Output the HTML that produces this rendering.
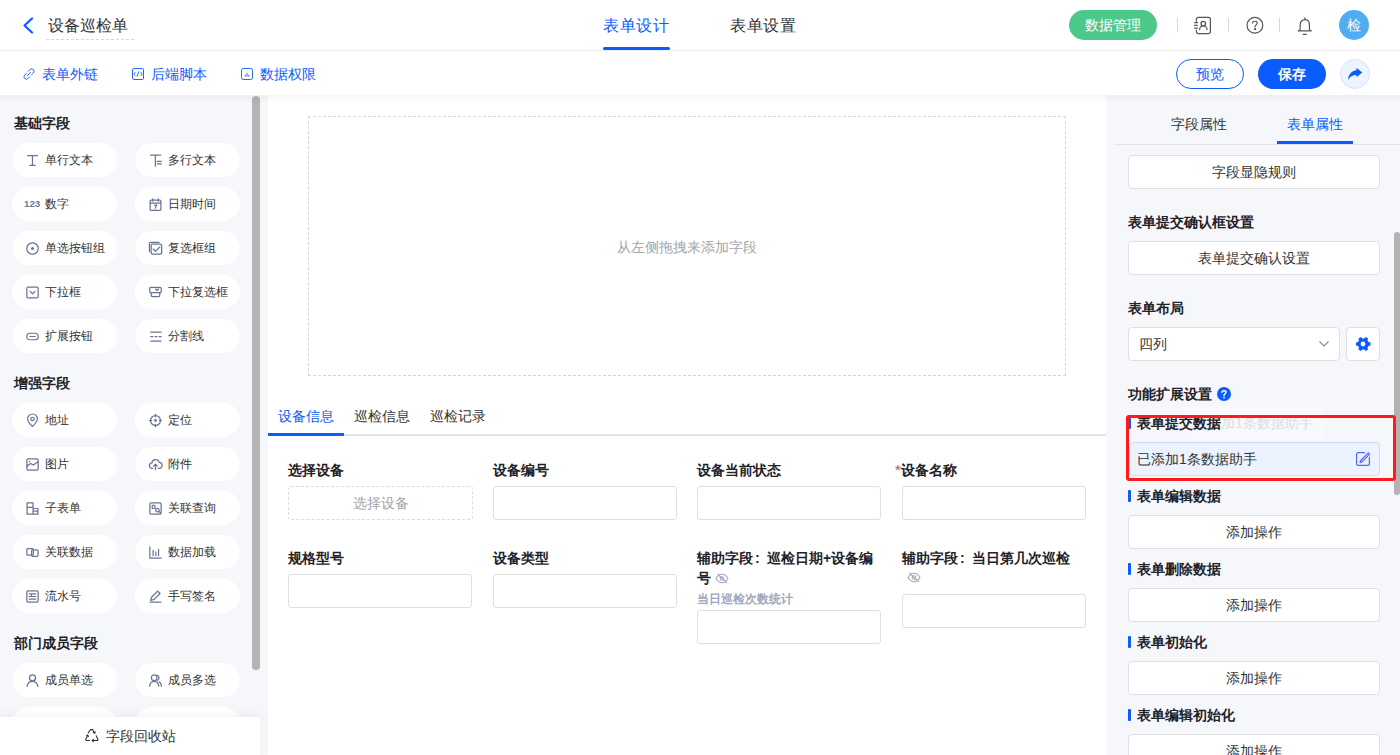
<!DOCTYPE html>
<html><head><meta charset="utf-8">
<style>
*{box-sizing:border-box;margin:0;padding:0}
html,body{width:1400px;height:755px;overflow:hidden;background:#f5f7fb;font-family:"Liberation Sans",sans-serif;color:#333}
.abs{position:absolute}
#hdr{position:absolute;left:0;top:0;width:1400px;height:51px;background:#fff;border-bottom:1px solid #eceef2}
#tb{position:absolute;left:0;top:51px;width:1400px;height:44px;background:#fff}
.t{position:absolute;white-space:nowrap;line-height:1}
/* left */
#left{position:absolute;left:0;top:95px;width:268px;height:660px;background:#f5f7fb;overflow:hidden}
.sec{position:absolute;left:14px;margin-top:1px;font-size:14px;font-weight:bold;color:#1f2329}
.pill{position:absolute;width:105px;height:34px;border-radius:17px;background:#fff}
.pill .ic{position:absolute;left:13.5px;top:10.5px;width:13px;height:13px;overflow:visible}
.pill .lb{position:absolute;left:33px;top:0;line-height:34px;font-size:12px;color:#333;white-space:nowrap}
#sb{position:absolute;left:252px;top:96px;width:8px;height:574px;border-radius:4px;background:#b3b3b3}
#foot{position:absolute;left:0;top:717px;width:260px;height:38px;background:#fff;box-shadow:0 -4px 8px rgba(0,0,0,0.04)}
/* center */
#canvas{position:absolute;left:268px;top:95px;width:838px;height:660px;background:#fff}
#drop{position:absolute;left:308px;top:116px;width:758px;height:260px;border:1px dashed #d6d6d6}
.lab{position:absolute;font-size:14px;font-weight:bold;color:#1f2329;white-space:nowrap;line-height:20px}
.inp{position:absolute;width:184px;height:34px;border:1px solid #e0e0e0;border-radius:3px;background:#fff}
/* right */
#right{position:absolute;left:1106px;top:95px;width:294px;height:660px;background:#f5f7fb}
.rbtn{position:absolute;left:1128px;width:252px;height:34px;background:#fff;border:1px solid #dfe0e3;border-radius:4px;font-size:14px;color:#333;text-align:center;line-height:32px}
.rlab{position:absolute;left:1128px;font-size:14px;font-weight:bold;color:#1f2329;white-space:nowrap;line-height:20px}
.bar{position:absolute;left:1128px;width:3px;height:12px;background:#0a5cff;border-radius:1px}
</style></head><body>

<div id="hdr"></div>
<div id="tb"></div>

<!-- header content -->
<svg class="abs" style="left:22px;top:17px" width="12" height="17" viewBox="0 0 12 17"><path d="M10 1.5 L2.5 8.5 L10 15.5" fill="none" stroke="#0a5cff" stroke-width="2.2" stroke-linecap="round" stroke-linejoin="round"/></svg>
<div class="t" style="left:48px;top:18px;font-size:16px;color:#333">设备巡检单</div>
<div class="abs" style="left:46px;top:39px;width:88px;border-top:1px dashed #d9d9d9"></div>

<div class="t" style="left:603px;top:18px;font-size:16px;color:#0a5cff;letter-spacing:0.6px">表单设计</div>
<div class="abs" style="left:603px;top:47px;width:67px;height:3px;border-radius:2px;background:#0a5cff"></div>
<div class="t" style="left:730px;top:18px;font-size:16px;color:#333;letter-spacing:0.6px">表单设置</div>

<div class="abs" style="left:1069px;top:10px;width:88px;height:30px;border-radius:15px;background:#4cc98a;color:#fff;font-size:14px;text-align:center;line-height:30px">数据管理</div>
<div class="abs" style="left:1177px;top:18px;width:1px;height:14px;background:#d8d8d8"></div>
<div class="abs" style="left:1228px;top:18px;width:1px;height:14px;background:#d8d8d8"></div>
<div class="abs" style="left:1279px;top:18px;width:1px;height:14px;background:#d8d8d8"></div>
<svg class="abs" style="left:1193px;top:16px" width="19" height="19" viewBox="0 0 19 19" fill="none" stroke="#555" stroke-width="1.25" stroke-linecap="round"><path d="M3.4 5.2V3.2a1.9 1.9 0 0 1 1.9-1.9H15.5a1.9 1.9 0 0 1 1.9 1.9V15.6a1.9 1.9 0 0 1-1.9 1.9H5.3a1.9 1.9 0 0 1-1.9-1.9V14"/><path d="M1.5 6.6h3M1.5 9.3h3M1.5 12.1h3"/><circle cx="10.3" cy="7.6" r="2.3"/><path d="M6.6 13.6a3.7 3.8 0 0 1 7.4 0"/></svg>
<svg class="abs" style="left:1246px;top:16px" width="19" height="19" viewBox="0 0 19 19" fill="none" stroke="#555" stroke-width="1.2" stroke-linecap="round"><circle cx="8.9" cy="9.3" r="7.9"/><path d="M6.6 7.1C6.6 4.6 11.2 4.6 11.2 7.1C11.2 8.8 9 8.9 9 10.9"/><circle cx="9" cy="13.2" r="0.5" fill="#555"/></svg>
<svg class="abs" style="left:1297px;top:17px" width="16" height="19" viewBox="0 0 16 19" fill="none" stroke="#555" stroke-width="1.2" stroke-linecap="round" stroke-linejoin="round"><path d="M7.8 0.9v1"/><path d="M3.2 12.2V7.6C3.2 4.6 5.2 2.6 7.8 2.6S12.4 4.6 12.4 7.6V12.2C12.4 13 13.4 13.6 14.3 13.9H1.3C2.2 13.6 3.2 13 3.2 12.2z"/><path d="M6.3 17.3H9.3"/></svg>
<div class="abs" style="left:1339px;top:10px;width:30px;height:30px;border-radius:15px;background:#52acf2;color:#fff;font-size:14px;text-align:center;line-height:30px">检</div>

<!-- toolbar -->
<svg class="abs" style="left:23px;top:68px" width="12" height="12" viewBox="0 0 12 12" fill="none" stroke="#1a5ff5" stroke-width="0.95" stroke-linecap="round"><path d="M5.2 3.3 L6.9 1.6 a2.4 2.4 0 0 1 3.4 3.4 L8.6 6.7"/><path d="M6.8 8.7 L5.1 10.4 a2.4 2.4 0 0 1 -3.4 -3.4 L3.4 5.3"/><path d="M4.4 7.6 L7.6 4.4"/></svg>
<div class="t" style="left:42px;top:67px;font-size:14px;color:#0a5cff">表单外链</div>
<svg class="abs" style="left:132px;top:68px" width="12" height="12" viewBox="0 0 12 12" fill="none" stroke="#1a5ff5" stroke-width="0.95"><rect x="0.5" y="0.5" width="11" height="11" rx="1.3"/><path d="M3.3 4.2 L1.8 6 L3.3 7.8M8.7 4.2 L10.2 6 L8.7 7.8M7 3.5 L5 8.5"/></svg>
<div class="t" style="left:151px;top:67px;font-size:14px;color:#0a5cff">后端脚本</div>
<svg class="abs" style="left:241px;top:68px" width="12" height="12" viewBox="0 0 12 12" fill="none" stroke="#1a5ff5" stroke-width="0.95"><rect x="0.5" y="0.5" width="11" height="11" rx="1.8"/><path d="M4.3 8.5V6.8M6 8.5V5M7.7 8.5V6.8"/></svg>
<div class="t" style="left:260px;top:67px;font-size:14px;color:#0a5cff">数据权限</div>

<div class="abs" style="left:1176px;top:59px;width:68px;height:30px;border-radius:15px;border:1px solid #0a5cff;color:#0a5cff;font-size:14px;text-align:center;line-height:28px;background:#fff">预览</div>
<div class="abs" style="left:1258px;top:59px;width:68px;height:30px;border-radius:15px;background:#0a5cff;color:#fff;font-size:14px;text-align:center;line-height:30px;font-weight:bold">保存</div>
<div class="abs" style="left:1340px;top:59px;width:30px;height:30px;border-radius:15px;background:#eef4ff;border:1px solid #d5e3fb"></div>
<svg class="abs" style="left:1347px;top:66px" width="16" height="16" viewBox="0 0 16 16"><path d="M9.5 1.7 L15.2 6.5 L9.5 11.3 V8.9 C5.6 8.9 3 10.5 1 14.1 C1.4 8.6 4.6 4.6 9.5 4.2 Z" fill="#0a5cff"/></svg>

<!-- left panel -->
<div id="left">
<div class="sec" style="top:19px">基础字段</div>
<div class="pill" style="left:12px;top:48px"><svg class="ic" viewBox="0 0 12 12"><path d="M1.5 1.5h9M6 1.5v9M3.5 10.5h5" stroke="#6b7494" stroke-width="1.15" fill="none" stroke-linecap="round" stroke-linejoin="round"/></svg><span class="lb">单行文本</span></div>
<div class="pill" style="left:135px;top:48px"><svg class="ic" viewBox="0 0 12 12"><path d="M1.2 1h9.6M5.9 1v10.2M7.6 6.9h3.8M7.6 9.2h3.8" stroke="#6b7494" stroke-width="1.15" fill="none" stroke-linecap="round" stroke-linejoin="round"/></svg><span class="lb">多行文本</span></div>
<div class="pill" style="left:12px;top:92px"><span style="position:absolute;left:12px;top:12px;font-family:'Liberation Sans',sans-serif;font-weight:bold;font-size:9.7px;line-height:10px;color:#6e7691">123</span><span class="lb">数字</span></div>
<div class="pill" style="left:135px;top:92px"><svg class="ic" viewBox="0 0 12 12"><rect x="1" y="2" width="10" height="9.5" rx="1.2" stroke="#6b7494" stroke-width="1.15" fill="none" stroke-linecap="round" stroke-linejoin="round"/><path d="M1 4.8h10M3.5 0.8v2.2M8.5 0.8v2.2M5 6.5h2.2L5.8 9.5" stroke="#6b7494" stroke-width="1.15" fill="none" stroke-linecap="round" stroke-linejoin="round"/></svg><span class="lb">日期时间</span></div>
<div class="pill" style="left:12px;top:136px"><svg class="ic" viewBox="0 0 12 12"><circle cx="6" cy="6" r="5.3" stroke="#6b7494" stroke-width="1.15" fill="none" stroke-linecap="round" stroke-linejoin="round"/><circle cx="6" cy="6" r="1.4" fill="#6b7494"/></svg><span class="lb">单选按钮组</span></div>
<div class="pill" style="left:135px;top:136px"><svg class="ic" viewBox="0 0 12 12"><path d="M0.4 9V1.2a0.9 0.9 0 0 1 0.9-0.9H9.4" stroke="#6b7494" stroke-width="1.15" fill="none" stroke-linecap="round" stroke-linejoin="round"/><rect x="2" y="1.9" width="9.7" height="9.3" rx="1" stroke="#6b7494" stroke-width="1.15" fill="none" stroke-linecap="round" stroke-linejoin="round"/><path d="M3.9 6.5l2.2 2.2 4-4.2" stroke="#6b7494" stroke-width="1.15" fill="none" stroke-linecap="round" stroke-linejoin="round"/></svg><span class="lb">复选框组</span></div>
<div class="pill" style="left:12px;top:180px"><svg class="ic" viewBox="0 0 12 12"><rect x="0.8" y="1" width="10.4" height="10" rx="1" stroke="#6b7494" stroke-width="1.15" fill="none" stroke-linecap="round" stroke-linejoin="round"/><path d="M3.8 5l2.2 2.2L8.2 5" stroke="#6b7494" stroke-width="1.15" fill="none" stroke-linecap="round" stroke-linejoin="round"/></svg><span class="lb">下拉框</span></div>
<div class="pill" style="left:135px;top:180px"><svg class="ic" viewBox="0 0 12 12"><rect x="0.7" y="1.2" width="10.6" height="5" rx="1" stroke="#6b7494" stroke-width="1.15" fill="none" stroke-linecap="round" stroke-linejoin="round"/><path d="M2.1 6.2v2.6a1 1 0 0 0 1 1h5.8a1 1 0 0 0 1-1V6.2" stroke="#6b7494" stroke-width="1.15" fill="none" stroke-linecap="round" stroke-linejoin="round"/><path d="M6.2 2.8l1.3 1.4 1.3-1.4" stroke="#6b7494" stroke-width="1.15" fill="none" stroke-linecap="round" stroke-linejoin="round"/></svg><span class="lb">下拉复选框</span></div>
<div class="pill" style="left:12px;top:224px"><svg class="ic" viewBox="0 0 12 12"><rect x="0.7" y="3" width="10.6" height="6" rx="3" stroke="#6b7494" stroke-width="1.15" fill="none" stroke-linecap="round" stroke-linejoin="round"/><path d="M3.5 6h5" stroke="#6b7494" stroke-width="1.15" fill="none" stroke-linecap="round" stroke-linejoin="round"/></svg><span class="lb">扩展按钮</span></div>
<div class="pill" style="left:135px;top:224px"><svg class="ic" viewBox="0 0 12 12"><path d="M1.6 2h9.5M1.6 10.2h9.5M1.6 6.2h2M5.6 6.2h1.7M9.4 6.2h1.7" stroke="#6b7494" stroke-width="1.15" fill="none" stroke-linecap="round" stroke-linejoin="round"/></svg><span class="lb">分割线</span></div>
<div class="sec" style="top:279px">增强字段</div>
<div class="pill" style="left:12px;top:308px"><svg class="ic" viewBox="0 0 12 12"><path d="M6 11.5C3 8.5 1.5 6.5 1.5 4.5a4.5 4.5 0 0 1 9 0c0 2-1.5 4-4.5 7z" stroke="#6b7494" stroke-width="1.15" fill="none" stroke-linecap="round" stroke-linejoin="round"/><circle cx="6" cy="4.6" r="1.6" stroke="#6b7494" stroke-width="1.15" fill="none" stroke-linecap="round" stroke-linejoin="round"/></svg><span class="lb">地址</span></div>
<div class="pill" style="left:135px;top:308px"><svg class="ic" viewBox="0 0 12 12"><circle cx="6" cy="6" r="4.6" stroke="#6b7494" stroke-width="1.15" fill="none" stroke-linecap="round" stroke-linejoin="round"/><circle cx="6" cy="6" r="1.3" fill="#6b7494"/><path d="M6 0.3v2.2M6 9.5v2.2M0.3 6h2.2M9.5 6h2.2" stroke="#6b7494" stroke-width="1.15" fill="none" stroke-linecap="round" stroke-linejoin="round"/></svg><span class="lb">定位</span></div>
<div class="pill" style="left:12px;top:352px"><svg class="ic" viewBox="0 0 12 12"><rect x="0.8" y="0.8" width="10.4" height="10.4" rx="1.2" stroke="#6b7494" stroke-width="1.15" fill="none" stroke-linecap="round" stroke-linejoin="round"/><path d="M0.8 7.5l3.5-2.5 2.5 1.5L11 3.5M3 3.3h0.5" stroke="#6b7494" stroke-width="1.15" fill="none" stroke-linecap="round" stroke-linejoin="round"/></svg><span class="lb">图片</span></div>
<div class="pill" style="left:135px;top:352px"><svg class="ic" viewBox="0 0 12 12"><path d="M3.5 9.5H3a2.5 2.5 0 0 1-0.3-5A3.5 3.5 0 0 1 9.5 4a2.6 2.6 0 0 1-0.3 5.5H8.5M6 10.8V6M4.3 7.5L6 5.8l1.7 1.7" stroke="#6b7494" stroke-width="1.15" fill="none" stroke-linecap="round" stroke-linejoin="round"/></svg><span class="lb">附件</span></div>
<div class="pill" style="left:12px;top:396px"><svg class="ic" viewBox="0 0 12 12"><path d="M1 0.8h5.5v10.4H1zM1 5h5.5M6.5 6h4.5v5.2H6.5M6.5 8.5h4.5" stroke="#6b7494" stroke-width="1.15" fill="none" stroke-linecap="round" stroke-linejoin="round"/></svg><span class="lb">子表单</span></div>
<div class="pill" style="left:135px;top:396px"><svg class="ic" viewBox="0 0 12 12"><rect x="0.8" y="0.8" width="10.4" height="10.4" rx="1" stroke="#6b7494" stroke-width="1.15" fill="none" stroke-linecap="round" stroke-linejoin="round"/><path d="M3 3h2.5v3H3z" stroke="#6b7494" stroke-width="1.15" fill="none" stroke-linecap="round" stroke-linejoin="round"/><circle cx="7.8" cy="7.5" r="1.6" stroke="#6b7494" stroke-width="1.15" fill="none" stroke-linecap="round" stroke-linejoin="round"/><path d="M9 8.7l1.5 1.5" stroke="#6b7494" stroke-width="1.15" fill="none" stroke-linecap="round" stroke-linejoin="round"/></svg><span class="lb">关联查询</span></div>
<div class="pill" style="left:12px;top:440px"><svg class="ic" viewBox="0 0 12 12"><rect x="0.8" y="2.5" width="6" height="6" rx="1" stroke="#6b7494" stroke-width="1.15" fill="none" stroke-linecap="round" stroke-linejoin="round"/><rect x="5.2" y="3.5" width="6" height="6" rx="1" stroke="#6b7494" stroke-width="1.15" fill="none" stroke-linecap="round" stroke-linejoin="round"/></svg><span class="lb">关联数据</span></div>
<div class="pill" style="left:135px;top:440px"><svg class="ic" viewBox="0 0 12 12"><path d="M0.8 0.8v10.4h10.4M3.8 4v5M6.3 5.5v3.5M8.8 3v6" stroke="#6b7494" stroke-width="1.15" fill="none" stroke-linecap="round" stroke-linejoin="round"/></svg><span class="lb">数据加载</span></div>
<div class="pill" style="left:12px;top:484px"><svg class="ic" viewBox="0 0 12 12"><rect x="0.8" y="0.8" width="10.4" height="10.4" rx="1" stroke="#6b7494" stroke-width="1.15" fill="none" stroke-linecap="round" stroke-linejoin="round"/><path d="M3 3.5h6M3 6h6M3 8.5h6M5 3.5v2.5" stroke="#6b7494" stroke-width="1.15" fill="none" stroke-linecap="round" stroke-linejoin="round"/></svg><span class="lb">流水号</span></div>
<div class="pill" style="left:135px;top:484px"><svg class="ic" viewBox="0 0 12 12"><path d="M1.5 9.5l1-3L8 1l2.2 2.2-5.5 5.5zM1 11.3h10" stroke="#6b7494" stroke-width="1.15" fill="none" stroke-linecap="round" stroke-linejoin="round"/></svg><span class="lb">手写签名</span></div>
<div class="sec" style="top:539px">部门成员字段</div>
<div class="pill" style="left:12px;top:568px"><svg class="ic" viewBox="0 0 12 12"><circle cx="6" cy="3.5" r="2.8" stroke="#6b7494" stroke-width="1.15" fill="none" stroke-linecap="round" stroke-linejoin="round"/><path d="M1 11.5c0.5-3.5 2.5-4.8 5-4.8s4.5 1.3 5 4.8" stroke="#6b7494" stroke-width="1.15" fill="none" stroke-linecap="round" stroke-linejoin="round"/></svg><span class="lb">成员单选</span></div>
<div class="pill" style="left:135px;top:568px"><svg class="ic" viewBox="0 0 12 12"><circle cx="4.8" cy="3.5" r="2.6" stroke="#6b7494" stroke-width="1.15" fill="none" stroke-linecap="round" stroke-linejoin="round"/><path d="M0.5 11.3c0.4-3.3 2-4.6 4.3-4.6s3.9 1.3 4.3 4.6M7.8 1.2a2.6 2.6 0 0 1 0 4.7M9.3 7.2c1.3 0.7 2 2 2.2 4" stroke="#6b7494" stroke-width="1.15" fill="none" stroke-linecap="round" stroke-linejoin="round"/></svg><span class="lb">成员多选</span></div>
<div class="pill" style="left:12px;top:612px"><svg class="ic" viewBox="0 0 12 12"></svg><span class="lb">部门单选</span></div>
<div class="pill" style="left:135px;top:612px"><svg class="ic" viewBox="0 0 12 12"></svg><span class="lb">部门多选</span></div>

</div>
<div id="sb"></div>
<div id="foot">
  <svg class="abs" style="left:85px;top:12px;overflow:visible" width="14" height="13" viewBox="0 0 14 13" fill="none" stroke="#333" stroke-width="1.1" stroke-linecap="round" stroke-linejoin="round"><path d="M3.2 4 L5.6 0.6 H7.6 L9.6 4"/><path d="M8.4 3.6 L9.7 4.2 L10.2 2.8"/><path d="M11.2 6.8 L13 10.4 L12.4 11.5 H7.2"/><path d="M8.4 10.3 L7.2 11.5 L8.4 12.6"/><path d="M4.5 11.5 H1.3 L0.6 10.4 L2.8 6.2"/><path d="M1.5 6.2 L2.8 6.2 L3.3 7.6"/></svg>
  <div class="t" style="left:106px;top:12px;font-size:14px;color:#333">字段回收站</div>
</div>

<!-- canvas -->
<div id="canvas"></div>
<div id="drop"></div>
<div class="t" style="left:617px;top:240px;font-size:14px;color:#a6a6a6">从左侧拖拽来添加字段</div>
<!-- canvas tabs -->
<div class="abs" style="left:268px;top:434px;width:838px;height:2px;background:#e4e4e4"></div>
<div class="abs" style="left:268px;top:433px;width:76px;height:3px;background:#0a5cff"></div>
<div class="t" style="left:278px;top:409px;font-size:14px;color:#0a5cff">设备信息</div>
<div class="t" style="left:354px;top:409px;font-size:14px;color:#333">巡检信息</div>
<div class="t" style="left:430px;top:409px;font-size:14px;color:#333">巡检记录</div>
<!-- row 1 -->
<div class="lab" style="left:288px;top:460px">选择设备</div>
<div class="abs" style="left:288px;top:486px;width:185px;height:34px;border:1px dashed #dcdcdc;border-radius:3px;text-align:center;line-height:32px;font-size:14px;color:#a6a6a6">选择设备</div>
<div class="lab" style="left:493px;top:460px">设备编号</div>
<div class="inp" style="left:493px;top:486px"></div>
<div class="lab" style="left:697px;top:460px">设备当前状态</div>
<div class="inp" style="left:697px;top:486px"></div>
<div class="lab" style="left:895px;top:460px"><span style="color:#e8393b;font-weight:normal;font-size:15px">*</span>设备名称</div>
<div class="inp" style="left:902px;top:486px"></div>
<!-- row 2 -->
<div class="lab" style="left:288px;top:548px">规格型号</div>
<div class="inp" style="left:288px;top:574px"></div>
<div class="lab" style="left:493px;top:548px">设备类型</div>
<div class="inp" style="left:493px;top:574px"></div>
<div class="lab" style="left:697px;top:548px;width:185px;white-space:normal">辅助字段<span style="display:inline-block;width:14px;padding-left:2px">:</span>巡检日期+设备编号 <svg style="vertical-align:-1px" width="14" height="11" viewBox="0 0 14 11" fill="none" stroke="#a3a9bb" stroke-width="1.1"><path d="M1 5.5C3 2.3 5 1.3 7 1.3s4 1 6 4.2C11 8.7 9 9.7 7 9.7S3 8.7 1 5.5z"/><circle cx="7" cy="5.5" r="1.8"/><path d="M2.5 1l9.5 9"/></svg></div>
<div class="t" style="left:697px;top:593px;font-size:12px;font-weight:bold;color:#9ea6bc">当日巡检次数统计</div>
<div class="inp" style="left:697px;top:610px"></div>
<div class="lab" style="left:902px;top:548px">辅助字段<span style="display:inline-block;width:14px;padding-left:2px">:</span>当日第几次巡检</div>
<svg class="abs" style="left:907px;top:572px" width="14" height="11" viewBox="0 0 14 11" fill="none" stroke="#a3a9bb" stroke-width="1.1"><path d="M1 5.5C3 2.3 5 1.3 7 1.3s4 1 6 4.2C11 8.7 9 9.7 7 9.7S3 8.7 1 5.5z"/><circle cx="7" cy="5.5" r="1.8"/><path d="M2.5 1l9.5 9"/></svg>
<div class="inp" style="left:902px;top:594px"></div>


<!-- right -->
<div id="right"></div>
<!-- right panel -->
<div class="abs" style="left:1114px;top:144px;width:286px;height:1px;background:#e1e4ea"></div>
<div class="t" style="left:1171px;top:117px;font-size:14px;color:#333">字段属性</div>
<div class="t" style="left:1287px;top:117px;font-size:14px;color:#0a5cff">表单属性</div>
<div class="abs" style="left:1277px;top:141px;width:76px;height:3px;background:#0a5cff"></div>
<div class="rbtn" style="top:155px;height:34px">字段显隐规则</div>
<div class="rlab" style="top:212px">表单提交确认框设置</div>
<div class="rbtn" style="top:241px;height:34px">表单提交确认设置</div>
<div class="rlab" style="top:298px">表单布局</div>
<div class="abs" style="left:1128px;top:327px;width:212px;height:34px;background:#fff;border:1px solid #dfe0e3;border-radius:4px"></div>
<div class="t" style="left:1139px;top:337px;font-size:14px;color:#333">四列</div>
<svg class="abs" style="left:1318px;top:340px" width="12" height="8" viewBox="0 0 12 8" fill="none" stroke="#8c8c8c" stroke-width="1.1"><path d="M1.5 1.5l4.5 4.5 4.5-4.5"/></svg>
<div class="abs" style="left:1346px;top:327px;width:34px;height:34px;background:#fff;border:1px solid #dfe0e3;border-radius:4px"></div>
<svg class="abs" style="left:1354px;top:335px" width="18" height="18" viewBox="0 0 18 18"><path transform="rotate(90 9 9)" fill="#0a5cff" fill-rule="evenodd" d="M7.6 1.5h2.8l0.5 2.1 1.6 0.9 2.1-0.6 1.4 2.4-1.6 1.5v1.9l1.6 1.5-1.4 2.4-2.1-0.6-1.6 0.9-0.5 2.1H7.6l-0.5-2.1-1.6-0.9-2.1 0.6-1.4-2.4 1.6-1.5V7.8L2 6.3l1.4-2.4 2.1 0.6 1.6-0.9zM9 6.6a2.4 2.4 0 1 0 0 4.8 2.4 2.4 0 1 0 0-4.8z"/></svg>
<div class="rlab" style="top:384px">功能扩展设置</div>
<svg class="abs" style="left:1217px;top:387px" width="14" height="14" viewBox="0 0 14 14"><circle cx="7" cy="7" r="7" fill="#0a5cff"/><path d="M5 5.3C5 3.3 9 3.3 9 5.3 9 6.7 7 6.8 7 8.5" fill="none" stroke="#fff" stroke-width="1.5" stroke-linecap="round"/><circle cx="7" cy="10.6" r="0.9" fill="#fff"/></svg>

<div class="abs" style="left:1184px;top:406px;width:139px;height:34px;background:rgba(255,255,255,0.3);border-radius:4px"></div>
<div class="t" style="left:1193px;top:416px;font-size:14px;color:#dcdde2">已添加1条数据助手</div>
<div class="bar" style="top:418px;height:11px"></div>
<div class="rlab" style="left:1137px;top:413px">表单提交数据</div>
<div class="abs" style="left:1129px;top:442px;width:251px;height:34px;background:#edf3fe;border:1px solid #c9dcfb;border-radius:4px"></div>
<div class="t" style="left:1137px;top:452px;font-size:14px;color:#333">已添加1条数据助手</div>
<svg class="abs" style="left:1355px;top:451px" width="16" height="16" viewBox="0 0 16 16" fill="none" stroke="#5068f6" stroke-width="1.2" stroke-linejoin="round" stroke-linecap="round"><path d="M9.6 1.6H3.3a1.7 1.7 0 0 0-1.7 1.7v9.4a1.7 1.7 0 0 0 1.7 1.7h9.4a1.7 1.7 0 0 0 1.7-1.7V6.3"/><path d="M13.3 1.9l1.3 1.3-7.6 7.6-2 0.8 0.7-2.1z"/></svg>
<div class="abs" style="left:1394px;top:232px;width:6px;height:263px;border-radius:3px;background:#b3b3b3"></div>
<div class="abs" style="left:1126px;top:415px;width:270px;height:66px;border:3px solid #ff1a1a;border-radius:3px"></div>

<div class="bar" style="top:490px"></div>
<div class="rlab" style="left:1137px;top:486px">表单编辑数据</div>
<div class="rbtn" style="top:515px">添加操作</div>
<div class="bar" style="top:563px"></div>
<div class="rlab" style="left:1137px;top:559px">表单删除数据</div>
<div class="rbtn" style="top:588px">添加操作</div>
<div class="bar" style="top:636px"></div>
<div class="rlab" style="left:1137px;top:632px">表单初始化</div>
<div class="rbtn" style="top:661px">添加操作</div>
<div class="bar" style="top:709px"></div>
<div class="rlab" style="left:1137px;top:705px">表单编辑初始化</div>
<div class="rbtn" style="top:734px">添加操作</div>


<div class="abs" style="left:0;top:95px;width:1400px;height:9px;background:linear-gradient(rgba(0,0,0,0.035),rgba(0,0,0,0))"></div>
</body></html>
